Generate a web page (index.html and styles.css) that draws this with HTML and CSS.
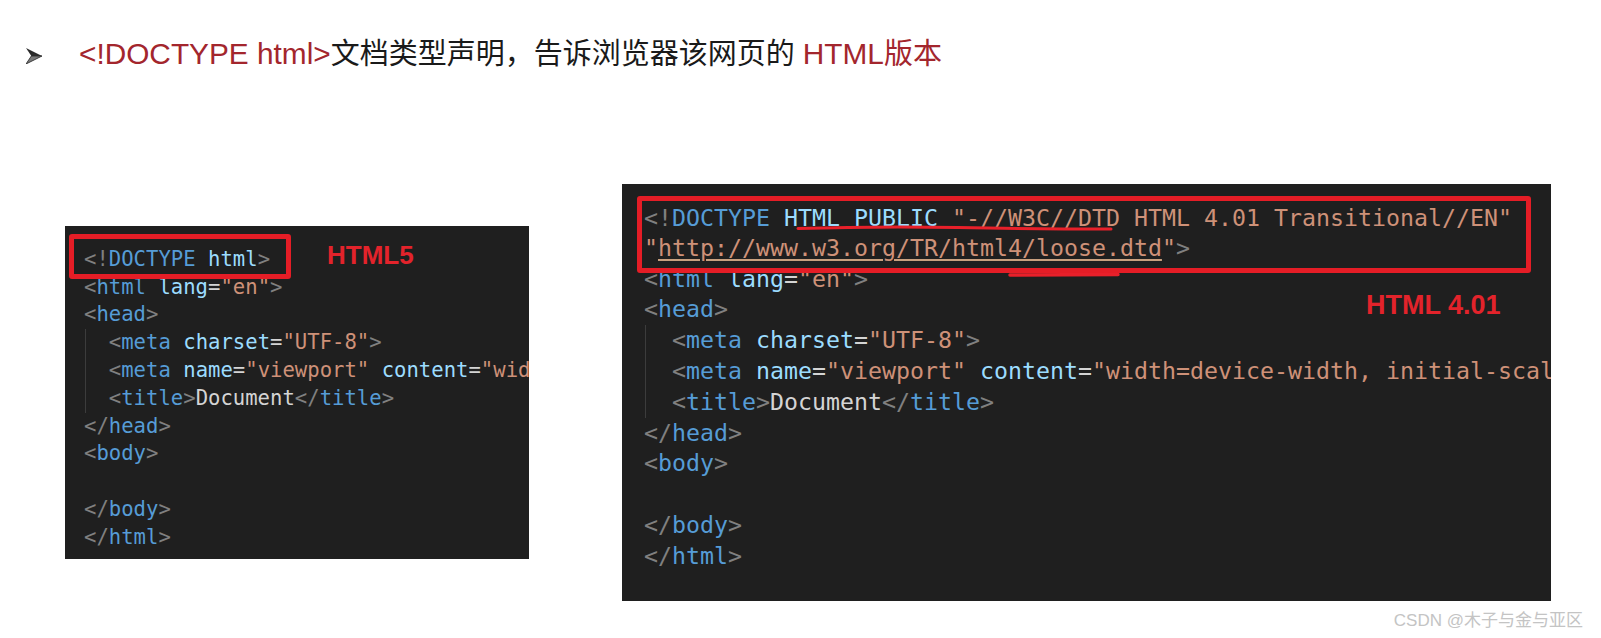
FILE: index.html
```
<!DOCTYPE html>
<html lang="zh-CN">
<head>
    <meta charset="UTF-8">
    <meta name="viewport" content="width=device-width, initial-scale=1.0">
    <title>DOCTYPE</title>

    <link rel="stylesheet" href="styles.css">
</head>
<body>
    <div class="title">
        <svg class="bullet" width="15" height="15" viewBox="0 0 15 15">
            <polygon points="0,0 15,7.5 5,7.5" fill="#2b2b2b"/>
            <polygon points="5,7.5 15,7.5 0,15" fill="#7a7a7a" stroke="#2b2b2b" stroke-width="0.8"/>
        </svg>
        <p><span class="hl">&lt;!DOCTYPE html&gt;</span>文档类型声明，告诉浏览器该网页的 <span class="hl">HTML</span><span class="red">版本</span></p>
    </div>

    <div class="slides">
        <div class="editor small">
            <div class="boxed"><div class="ln"><span class="p">&lt;!</span><span class="t">DOCTYPE</span> <span class="a">html</span><span class="p">&gt;</span></div></div>
            <div class="code">
                <div class="ln"><span class="p">&lt;</span><span class="t">html</span> <span class="a">lang</span><span class="x">=</span><span class="s">"en"</span><span class="p">&gt;</span></div>
                <div class="ln"><span class="p">&lt;</span><span class="t">head</span><span class="p">&gt;</span></div>
                <div class="guide">
                    <div class="ln">  <span class="p">&lt;</span><span class="t">meta</span> <span class="a">charset</span><span class="x">=</span><span class="s">"UTF-8"</span><span class="p">&gt;</span></div>
                    <div class="ln">  <span class="p">&lt;</span><span class="t">meta</span> <span class="a">name</span><span class="x">=</span><span class="s">"viewport"</span> <span class="a">content</span><span class="x">=</span><span class="s">"width=device-width, initial-scale=1.0"</span><span class="p">&gt;</span></div>
                    <div class="ln">  <span class="p">&lt;</span><span class="t">title</span><span class="p">&gt;</span><span class="x">Document</span><span class="p">&lt;/</span><span class="t">title</span><span class="p">&gt;</span></div>
                </div>
                <div class="ln"><span class="p">&lt;/</span><span class="t">head</span><span class="p">&gt;</span></div>
                <div class="ln"><span class="p">&lt;</span><span class="t">body</span><span class="p">&gt;</span></div>
                <div class="ln"> </div>
                <div class="ln"><span class="p">&lt;/</span><span class="t">body</span><span class="p">&gt;</span></div>
                <div class="ln"><span class="p">&lt;/</span><span class="t">html</span><span class="p">&gt;</span></div>
            </div>
            <div class="label label-5">HTML5</div>
        </div>

        <div class="editor big">
            <div class="pasted">
                <div class="ln"><span class="p">&lt;!</span><span class="t">DOCTYPE</span> <span class="a">HTML PUBLIC</span> <span class="s">"-//W3C//DTD HTML 4.01 Transitional//EN"</span></div>
                <div class="ln"><span class="s">"<span class="url">http://www.w3.org/TR/html4/loose.dtd</span>"</span><span class="p">&gt;</span></div>
                <svg class="scribble" width="330" height="80" viewBox="0 0 330 80">
                    <path d="M0,27.5 Q80,25 160,26.5 T313,28" fill="none" stroke="#e8202a" stroke-width="3" stroke-linecap="round"/>
                    <path d="M212,74 L320,73.5" fill="none" stroke="#e8202a" stroke-width="3.5" stroke-linecap="round"/>
                </svg>
            </div>
            <div class="code">
                <div class="ln"><span class="p">&lt;</span><span class="t">html</span> <span class="a">lang</span><span class="x">=</span><span class="s">"en"</span><span class="p">&gt;</span></div>
                <div class="ln"><span class="p">&lt;</span><span class="t">head</span><span class="p">&gt;</span></div>
                <div class="guide">
                    <div class="ln">  <span class="p">&lt;</span><span class="t">meta</span> <span class="a">charset</span><span class="x">=</span><span class="s">"UTF-8"</span><span class="p">&gt;</span></div>
                    <div class="ln">  <span class="p">&lt;</span><span class="t">meta</span> <span class="a">name</span><span class="x">=</span><span class="s">"viewport"</span> <span class="a">content</span><span class="x">=</span><span class="s">"width=device-width, initial-scale=1.0"</span><span class="p">&gt;</span></div>
                    <div class="ln">  <span class="p">&lt;</span><span class="t">title</span><span class="p">&gt;</span><span class="x">Document</span><span class="p">&lt;/</span><span class="t">title</span><span class="p">&gt;</span></div>
                </div>
                <div class="ln"><span class="p">&lt;/</span><span class="t">head</span><span class="p">&gt;</span></div>
                <div class="ln"><span class="p">&lt;</span><span class="t">body</span><span class="p">&gt;</span></div>
                <div class="ln"> </div>
                <div class="ln"><span class="p">&lt;/</span><span class="t">body</span><span class="p">&gt;</span></div>
                <div class="ln"><span class="p">&lt;/</span><span class="t">html</span><span class="p">&gt;</span></div>
            </div>
            <div class="label label-4">HTML 4.01</div>
        </div>
    </div>

    <div class="mark">CSDN @木子与金与亚区</div>
</body>
</html>
```

FILE: styles.css
```
*{
    margin: 0;
    padding: 0;
    box-sizing: border-box;
}

body{
    background: #fff;
    font-family: "Liberation Sans", "Noto Sans CJK SC", sans-serif;
    width: 1601px;
    height: 638px;
    overflow: hidden;
}

.title{
    display: flex;
    align-items: center;
    gap: 37px;
    padding: 34px 0 0 26px;
}

.bullet{
    width: 16px;
    height: 16px;
    margin-top: 3px;
}

.title p{
    font-size: 29px;
    line-height: 40px;
    color: #1a1a1a;
    white-space: nowrap;
}

.hl{
    color: #a3262d;
    font-size: 29.8px;
}

.red{
    color: #a3262d;
}

.slides{
    display: flex;
    align-items: flex-start;
    gap: 93px;
    padding-left: 65px;
}

.editor{
    position: relative;
    background: #1f1f1f;
    overflow: hidden;
    font-family: "DejaVu Sans Mono", monospace;
}

.ln{
    white-space: pre;
    height: 1lh;
}

.small{
    width: 464px;
    height: 333px;
    margin-top: 152px;
    padding-top: 8px;
    font-size: 20.6px;
    line-height: 27.8px;
}

.small .boxed{
    position: relative;
    z-index: 1;
    width: 222px;
    margin: 0 0 -5px 4px;
    padding: 6.8px 0 0 10px;
    border: 5px solid #e51d26;
    border-radius: 3px;
}

.small .code{
    padding-left: 19px;
}

.big{
    width: 929px;
    height: 417px;
    margin-top: 110px;
    padding-top: 12px;
    font-size: 23.25px;
    line-height: 30.8px;
}

.big .pasted{
    position: relative;
    z-index: 1;
    width: 894px;
    margin: 0 0 -9.9px 15px;
    padding: 1.5px 0 4.4px 2px;
    background: #1f1f1f;
    border: 5px solid #e51d26;
    border-radius: 3px;
}

.big .code{
    padding-left: 22px;
}

.scribble{
    position: absolute;
    left: 156px;
    top: 0;
    overflow: visible;
}

.guide{
    background: linear-gradient(#3c3c3c, #3c3c3c) 1px 0 / 1px 100% no-repeat;
}

.p{ color: #808080; }
.t{ color: #569cd6; }
.a{ color: #9cdcfe; }
.s{ color: #ce9178; }
.x{ color: #d4d4d4; }

.url{
    text-decoration: underline;
    text-decoration-color: #c9a07f;
    text-decoration-thickness: 1.5px;
    text-underline-offset: 3px;
}

.label{
    position: absolute;
    font-family: "Liberation Sans", sans-serif;
    font-weight: bold;
    color: #e3232b;
    white-space: nowrap;
}

.label-5{
    left: 262px;
    top: 15.6px;
    font-size: 26px;
    line-height: 26px;
}

.label-4{
    left: 744px;
    top: 107.5px;
    font-size: 27px;
    line-height: 27px;
}

.mark{
    margin-top: 10px;
    padding-right: 18px;
    text-align: right;
    font-size: 17px;
    line-height: 20px;
    color: #c4c4c4;
}
```
